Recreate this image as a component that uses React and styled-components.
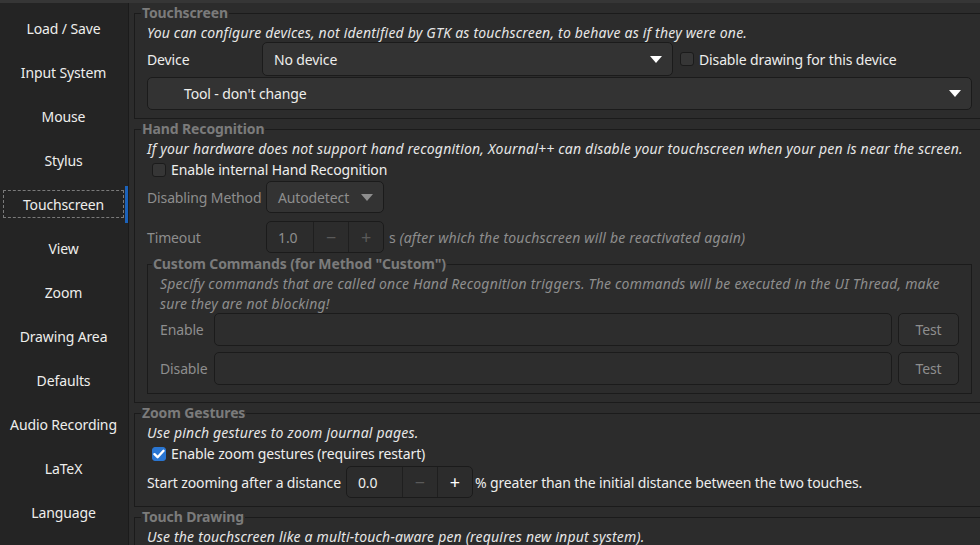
import React from "react";
import styled, { createGlobalStyle } from "styled-components";

const GlobalStyle = createGlobalStyle`
  html, body {
    margin: 0;
    padding: 0;
    background: #2c2c2c;
  }
  body {
    font-family: "Noto Sans", "DejaVu Sans", sans-serif;
    font-size: 14px;
    letter-spacing: -0.13px;
    color: #eeeeec;
  }
`;

const Window = styled.div`
  width: 980px;
  height: 545px;
  overflow: hidden;
  display: flex;
  flex-direction: column;
  background: #2c2c2c;
`;

const TopStrip = styled.div`
  height: 3px;
  flex: none;
  background: #363636;
`;

const Body = styled.div`
  flex: 1;
  display: flex;
  min-height: 0;
`;

const Sidebar = styled.div`
  width: 128px;
  flex: none;
  background: #242424;
  border-right: 1px solid #1b1b1b;
  display: flex;
  flex-direction: column;
  gap: 7px;
  padding-top: 7px;
`;

const NavItem = styled.div`
  height: 37px;
  display: flex;
  align-items: center;
  justify-content: center;
  box-sizing: border-box;
  padding: 4px 0 5px 3px;
  border-right: 3px solid ${(p) => (p.active ? "#1c62b9" : "transparent")};
`;

const NavLabel = styled.div`
  width: 100%;
  height: 100%;
  box-sizing: border-box;
  display: flex;
  align-items: center;
  justify-content: center;
  color: #eeeeec;
  border: 1px dashed ${(p) => (p.active ? "#7a7a7a" : "transparent")};
  margin-right: 1px;
`;

const Main = styled.div`
  flex: 1;
  padding-left: 5px;
  overflow: hidden;
`;

const Frame = styled.fieldset`
  width: 851px;
  box-sizing: border-box;
  margin: 0;
  padding: 0 12px ${(p) => p.pb ?? 8}px 12px;
  border: 1px solid #1b1b1b;
  display: flex;
  flex-direction: column;
`;

const SubFrame = styled(Frame)`
  width: auto;
  margin-top: 1px;
`;

const Legend = styled.legend`
  padding: 0 1px;
  margin-left: ${(p) => p.ml ?? -6}px;
  line-height: 20px;
  font-weight: bold;
  color: #7b7b7b;
`;

const Desc = styled.div`
  line-height: ${(p) => p.lh ?? 20}px;
  font-style: italic;
  letter-spacing: 0.2px;
  color: ${(p) => (p.dim ? "#8e8e8e" : "#e6e6e6")};
  white-space: nowrap;
`;

const Row = styled.div`
  display: flex;
  align-items: center;
  height: ${(p) => p.h}px;
  margin-top: ${(p) => p.mt ?? 0}px;
  flex: none;
`;

const FieldLabel = styled.div`
  width: ${(p) => p.w}px;
  flex: none;
  color: ${(p) => (p.dim ? "#8e8e8e" : "#eeeeec")};
  white-space: nowrap;
`;

const Combo = styled.div`
  width: ${(p) => (p.w ? `${p.w}px` : "auto")};
  flex: ${(p) => (p.w ? "none" : "1")};
  height: 100%;
  box-sizing: border-box;
  background: #333333;
  border: 1px solid #1b1b1b;
  border-radius: 5px;
  display: flex;
  align-items: center;
  justify-content: space-between;
  padding: 0 10px 0 ${(p) => p.pl ?? 11}px;
  color: ${(p) => (p.dim ? "#8e8e8e" : "#eeeeec")};
`;

const Arrow = ({ dim }) => (
  <svg width="12" height="7" viewBox="0 0 12 7">
    <path d="M0 0 L12 0 L6 7 Z" fill={dim ? "#8e8e8e" : "#ffffff"} />
  </svg>
);

const CheckBox = styled.div`
  width: 14px;
  height: 14px;
  flex: none;
  box-sizing: border-box;
  border-radius: 3px;
  margin: 0 5px 0 ${(p) => p.ml ?? 5}px;
  background: ${(p) => (p.checked ? "#2a76d2" : "#363636")};
  border: 1px solid ${(p) => (p.checked ? "#2a76d2" : "#1b1b1b")};
  display: flex;
  align-items: center;
  justify-content: center;
`;

const Tick = () => (
  <svg width="12" height="10" viewBox="0 0 12 10">
    <path d="M1.5 5.2 L4.6 8.2 L10.5 1.8" fill="none" stroke="#ffffff" strokeWidth="2.4" strokeLinecap="round" strokeLinejoin="round" />
  </svg>
);

const Text = styled.span`
  color: ${(p) => (p.dim ? "#8e8e8e" : "#eeeeec")};
  font-style: ${(p) => (p.italic ? "italic" : "normal")};
  letter-spacing: ${(p) => (p.italic ? "0.2px" : "inherit")};
  white-space: nowrap;
`;

const Spin = styled.div`
  width: ${(p) => p.w}px;
  height: 100%;
  flex: none;
  box-sizing: border-box;
  border: 1px solid #1b1b1b;
  border-radius: 5px;
  display: flex;
  margin: 0 ${(p) => p.mr ?? 5}px 0 ${(p) => p.ml ?? 0}px;
  overflow: hidden;
`;

const SpinValue = styled.div`
  flex: 1;
  display: flex;
  align-items: center;
  padding-left: 11px;
  color: ${(p) => (p.dim ? "#8e8e8e" : "#eeeeec")};
`;

const SpinButton = styled.div`
  width: 34px;
  flex: none;
  border-left: 1px solid #1f1f1f;
  display: flex;
  align-items: center;
  justify-content: center;
  font-size: 18px;
  color: ${(p) => (p.dim ? "#5a5a5a" : "#ffffff")};
`;

const Entry = styled.div`
  flex: 1;
  height: 100%;
  box-sizing: border-box;
  border: 1px solid #1b1b1b;
  border-radius: 5px;
  background: #2d2d2d;
`;

const Button = styled.div`
  width: 61px;
  height: 100%;
  box-sizing: border-box;
  margin-left: 6px;
  border: 1px solid #1b1b1b;
  border-radius: 5px;
  background: #2f2f2f;
  display: flex;
  align-items: center;
  justify-content: center;
  color: #8e8e8e;
`;

const sections = [
  "Load / Save",
  "Input System",
  "Mouse",
  "Stylus",
  "Touchscreen",
  "View",
  "Zoom",
  "Drawing Area",
  "Defaults",
  "Audio Recording",
  "LaTeX",
  "Language",
];

const SpinBox = ({ value, w, dim, minusDim, plusDim, ml, mr }) => (
  <Spin w={w} ml={ml} mr={mr}>
    <SpinValue dim={dim}>{value}</SpinValue>
    <SpinButton dim={minusDim}>−</SpinButton>
    <SpinButton dim={plusDim}>+</SpinButton>
  </Spin>
);

export default function App() {
  return (
    <Window>
      <GlobalStyle />
      <TopStrip />
      <Body>
        <Sidebar>
          {sections.map((s) => (
            <NavItem key={s} active={s === "Touchscreen"}>
              <NavLabel active={s === "Touchscreen"}>{s}</NavLabel>
            </NavItem>
          ))}
        </Sidebar>
        <Main>
          <Frame>
            <Legend>Touchscreen</Legend>
            <Desc lh={19}>
              You can configure devices, not identified by GTK as touchscreen, to behave as if they were one.
            </Desc>
            <Row h={34}>
              <FieldLabel w={115}>Device</FieldLabel>
              <Combo w={411}>
                No device
                <Arrow />
              </Combo>
              <CheckBox ml={7} />
              <Text>Disable drawing for this device</Text>
            </Row>
            <Row h={33} mt={1}>
              <Combo pl={36}>
                Tool - don't change
                <Arrow />
              </Combo>
            </Row>
          </Frame>

          <Frame>
            <Legend>Hand Recognition</Legend>
            <Desc>
              If your hardware does not support hand recognition, Xournal++ can disable your touchscreen when your pen is near the screen.
            </Desc>
            <Row h={21}>
              <CheckBox />
              <Text>Enable internal Hand Recognition</Text>
            </Row>
            <Row h={32} mt={1}>
              <FieldLabel w={119} dim>Disabling Method</FieldLabel>
              <Combo w={118} dim>
                Autodetect
                <Arrow dim />
              </Combo>
            </Row>
            <Row h={32} mt={8}>
              <FieldLabel w={119} dim>Timeout</FieldLabel>
              <SpinBox value="1.0" w={118} dim minusDim plusDim />
              <Text dim>s </Text>
              <Text dim italic>&nbsp;(after which the touchscreen will be reactivated again)</Text>
            </Row>
            <SubFrame>
              <Legend ml={-8}>Custom Commands (for Method "Custom")</Legend>
              <Desc dim>
                Specify commands that are called once Hand Recognition triggers. The commands will be executed in the UI Thread, make
              </Desc>
              <Desc dim lh={19}>sure they are not blocking!</Desc>
              <Row h={33}>
                <FieldLabel w={54} dim>Enable</FieldLabel>
                <Entry />
                <Button>Test</Button>
              </Row>
              <Row h={33} mt={6}>
                <FieldLabel w={54} dim>Disable</FieldLabel>
                <Entry />
                <Button>Test</Button>
              </Row>
            </SubFrame>
          </Frame>

          <Frame>
            <Legend>Zoom Gestures</Legend>
            <Desc>Use pinch gestures to zoom journal pages.</Desc>
            <Row h={21}>
              <CheckBox checked>
                <Tick />
              </CheckBox>
              <Text>Enable zoom gestures (requires restart)</Text>
            </Row>
            <Row h={32} mt={2}>
              <Text>Start zooming after a distance</Text>
              <SpinBox value="0.0" w={127} ml={5} mr={2} minusDim />
              <Text>% greater than the initial distance between the two touches.</Text>
            </Row>
          </Frame>

          <Frame>
            <Legend>Touch Drawing</Legend>
            <Desc>Use the touchscreen like a multi-touch-aware pen (requires new input system).</Desc>
          </Frame>
        </Main>
      </Body>
    </Window>
  );
}
